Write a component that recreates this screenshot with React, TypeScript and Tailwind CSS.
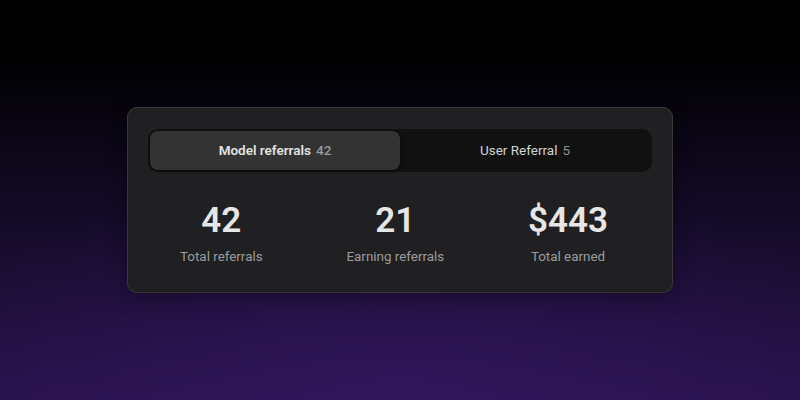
import React from "react";

const stats = [
  { value: "42", label: "Total referrals" },
  { value: "21", label: "Earning referrals" },
  { value: "$443", label: "Total earned" },
];

export default function App() {
  return (
    <div
      className="flex h-[400px] w-[800px] items-start justify-center bg-[radial-gradient(ellipse_70%_55%_at_50%_100%,rgba(58,26,108,0.55),transparent),linear-gradient(to_bottom,#000_12%,#120a24_50%,#28124a_100%)] pt-[107px]"
      style={{ fontFamily: "Roboto, 'Noto Sans', sans-serif" }}
    >
      <div className="w-[546px] rounded-[10px] border border-[#38383a] bg-[#202022] px-5 pb-[25px] pt-[21px] shadow-[0_4px_20px_rgba(0,0,0,0.35)]">
        {/* tabs */}
        <div className="flex h-[43px] rounded-[10px] bg-[#111112] p-[2px]">
          <button
            type="button"
            className="flex flex-1 items-center justify-center gap-[5px] rounded-[8px] bg-[#333334] text-[13.5px] font-semibold text-[#e2e2e2] shadow-[0_1px_3px_rgba(0,0,0,0.5)]"
          >
            Model referrals <span className="font-medium text-[#9a9a9c]">42</span>
          </button>
          <button
            type="button"
            className="flex flex-1 items-center justify-center gap-[5px] rounded-[8px] text-[13.5px] text-[#d2d2d2]"
          >
            User Referral <span className="text-[#8f8f91]">5</span>
          </button>
        </div>

        {/* stats */}
        <div className="mt-[29px] flex justify-between pl-8 pr-11">
          {stats.map((s) => (
            <div key={s.label} className="flex flex-col items-center">
              <span className="text-[35px] font-semibold leading-[40px] text-[#e6e6e6]">{s.value}</span>
              <span className="mt-[6px] text-[13.4px] leading-5 text-[#9c9c9e]">{s.label}</span>
            </div>
          ))}
        </div>
      </div>
    </div>
  );
}
